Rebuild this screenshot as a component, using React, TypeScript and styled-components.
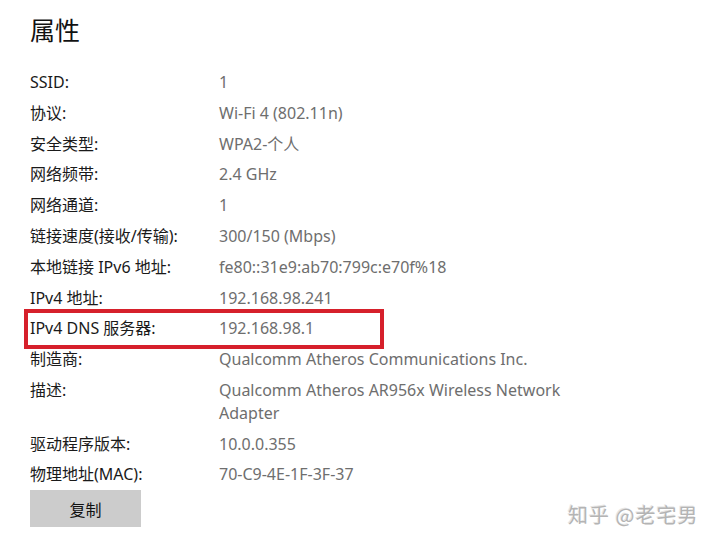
import React from "react";
import styled, { createGlobalStyle } from "styled-components";

const Global = createGlobalStyle`
  html, body { margin: 0; padding: 0; background: #ffffff; }
  body { font-family: "Noto Sans", "Noto Sans CJK SC", sans-serif; }
`;

const Page = styled.div`
  position: relative;
  width: 720px;
  height: 546px;
  box-sizing: border-box;
  padding: 12px 0 0 30px;
  overflow: hidden;
  background: #ffffff;
`;

const Title = styled.h1`
  margin: 0;
  font-family: "Noto Sans CJK SC", sans-serif;
  font-weight: 400;
  font-size: 25px;
  line-height: 34px;
  color: #111111;
`;

const List = styled.div`
  margin-top: 21px;
  display: flex;
  flex-direction: column;
`;

const Row = styled.div<{ $highlight?: boolean }>`
  position: relative;
  display: grid;
  grid-template-columns: 189px 1fr;
  padding: 4px 0;
  font-size: 16px;
  line-height: 22.8px;
  ${(p) =>
    p.$highlight &&
    `
    &::after {
      content: "";
      position: absolute;
      left: -6px;
      top: -4px;
      width: 360px;
      height: 40px;
      box-sizing: border-box;
      border: 4px solid #d6202b;
      pointer-events: none;
    }
  `}
`;

const Label = styled.div`
  color: #1a1a1a;
  font-family: "Noto Sans", "Noto Sans CJK SC", sans-serif;
`;

const Value = styled.div`
  color: #6e6e6e;
  font-family: "Noto Sans", "Noto Sans CJK SC", sans-serif;
  max-width: 370px;
`;

const CopyButton = styled.button`
  width: 111px;
  height: 37px;
  border: none;
  background: #cccccc;
  color: #111111;
  font-family: "Noto Sans CJK SC", sans-serif;
  font-size: 16px;
  padding: 0;
  cursor: pointer;
`;

const Watermark = styled.div`
  position: absolute;
  left: 568px;
  top: 501px;
  font-family: "Noto Sans CJK SC", sans-serif;
  font-size: 20px;
  line-height: 28px;
  color: #b4b4b4;
  letter-spacing: 1px;
  text-shadow: 1px 1px 0 #ffffff, -1px -1px 0 #e6e6e6;
`;

const rows: { label: string; value: string; highlight?: boolean }[] = [
  { label: "SSID:", value: "1" },
  { label: "协议:", value: "Wi-Fi 4 (802.11n)" },
  { label: "安全类型:", value: "WPA2-个人" },
  { label: "网络频带:", value: "2.4 GHz" },
  { label: "网络通道:", value: "1" },
  { label: "链接速度(接收/传输):", value: "300/150 (Mbps)" },
  { label: "本地链接 IPv6 地址:", value: "fe80::31e9:ab70:799c:e70f%18" },
  { label: "IPv4 地址:", value: "192.168.98.241" },
  { label: "IPv4 DNS 服务器:", value: "192.168.98.1", highlight: true },
  { label: "制造商:", value: "Qualcomm Atheros Communications Inc." },
  { label: "描述:", value: "Qualcomm Atheros AR956x Wireless Network Adapter" },
  { label: "驱动程序版本:", value: "10.0.0.355" },
  { label: "物理地址(MAC):", value: "70-C9-4E-1F-3F-37" },
];

export default function App() {
  return (
    <Page>
      <Global />
      <Title>属性</Title>
      <List>
        {rows.map((r) => (
          <Row key={r.label} $highlight={r.highlight}>
            <Label>{r.label}</Label>
            <Value>{r.value}</Value>
          </Row>
        ))}
      </List>
      <CopyButton>复制</CopyButton>
      <Watermark>知乎 @老宅男</Watermark>
    </Page>
  );
}
